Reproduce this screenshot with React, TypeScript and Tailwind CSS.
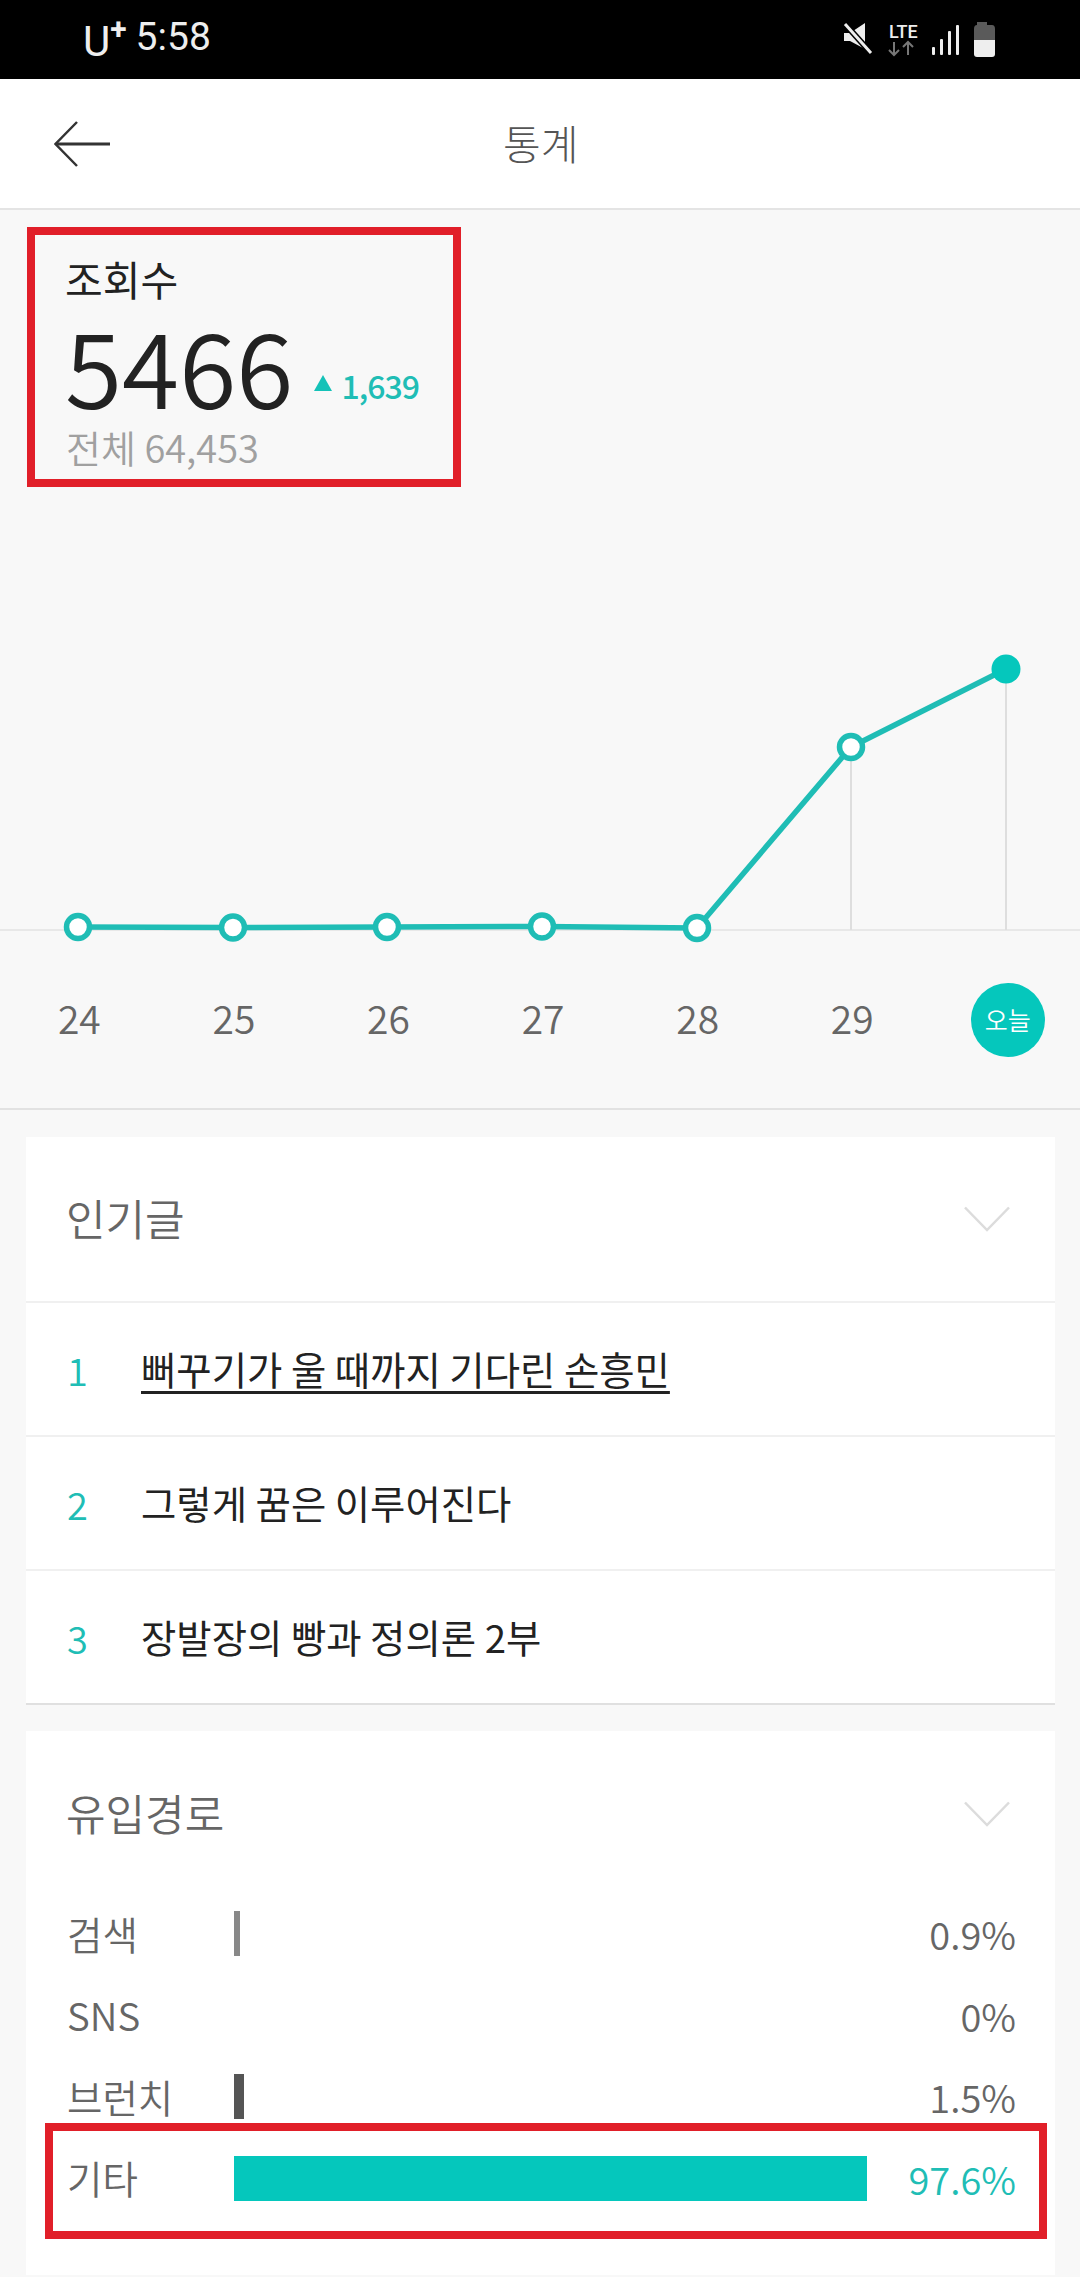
import React from "react";

const chartPoints = [
  { x: 78, y: 927 },
  { x: 233, y: 927.5 },
  { x: 387, y: 927 },
  { x: 542, y: 926.5 },
  { x: 697, y: 928 },
  { x: 851, y: 747 },
  { x: 1006, y: 669 },
];

const CHART_TOP = 487;

const popularPosts = [
  { rank: 1, title: "뻐꾸기가 울 때까지 기다린 손흥민", underline: true },
  { rank: 2, title: "그렇게 꿈은 이루어진다", underline: false },
  { rank: 3, title: "장발장의 빵과 정의론 2부", underline: false },
];

const Chevron = () => (
  <svg width="46" height="26" viewBox="0 0 46 26" fill="none" className="mt-[3px] block">
    <path d="M1 1.5 L23 24 L45 1.5" stroke="#dcdcdc" strokeWidth="2.5" />
  </svg>
);

const StatusBar = () => (
  <div className="flex h-[79px] items-center justify-between bg-black pl-[83px] pr-[83px] font-['Roboto',sans-serif] text-[#eeeeee]">
    <div className="flex items-start">
      <span className="text-[42px] leading-[46px] mt-[4px]">U</span>
      <span className="text-[30px] leading-[26px] font-bold mt-[1px]">+</span>
      <span className="ml-[9px] text-[39px] leading-[46px] -mt-[1px]">5:58</span>
    </div>
    <svg width="155" height="36" viewBox="0 0 155 36" className="block">
      {/* mute */}
      <path d="M2 11 L8 11 L23 1 L23 27 L8 19 L2 19 Z" fill="#eeeeee" />
      <path d="M3 2 L29 31" stroke="#000" strokeWidth="6" />
      <path d="M3 2 L29 31" stroke="#eeeeee" strokeWidth="3" />
      {/* network arrows */}
      <path d="M52 20 V33 M47 28 L52 33 L57 28" stroke="#777" strokeWidth="2" fill="none" />
      <path d="M66 33 V20 M61 25 L66 20 L71 25" stroke="#777" strokeWidth="2" fill="none" />
      {/* signal */}
      <rect x="90" y="25" width="3" height="8" rx="1" fill="#eeeeee" />
      <rect x="98" y="17" width="3" height="16" rx="1" fill="#eeeeee" />
      <rect x="106" y="9" width="3" height="24" rx="1" fill="#eeeeee" />
      <rect x="114" y="3" width="3" height="30" rx="1" fill="#eeeeee" />
      {/* battery */}
      <path d="M135 0 H145 V3 H150 Q153 3 153 7 V18 H132 V7 Q132 3 135 3 Z" fill="#5a5a5a" />
      <path d="M132 18 H153 V32 Q153 35 150 35 H135 Q132 35 132 32 Z" fill="#eeeeee" />
    </svg>
  </div>
);

const TrafficRow = ({ label, value, barClass, active }: { label: string; value: string; barClass: string; active?: boolean }) => (
  <div className="flex h-[81.5px] items-center">
    <span className="w-[167px] shrink-0 text-[38.5px] font-[350] text-[#666666]">{label}</span>
    <div className={`h-[45px] ${barClass}`} />
    <span className={`ml-auto text-[38px] font-[350] ${active ? "text-[#20bdb5]" : "text-[#666666]"}`}>{value}</span>
  </div>
);

const App = () => {
  const polyline = chartPoints.map((p) => `${p.x},${p.y - CHART_TOP}`).join(" ");

  return (
    <div className="relative h-[2277px] overflow-hidden bg-[#f8f8f8] font-['Noto_Sans_CJK_KR',sans-serif]">
      <StatusBar />
      <div className="relative">
        <span className="absolute left-[889px] top-[-56px] font-['Roboto',sans-serif] text-[18px] leading-[18px] font-medium text-[#eeeeee]">LTE</span>
      </div>

      <header className="flex h-[131px] items-center border-b-2 border-[#e4e4e4] bg-white pl-[54px]">
        <svg width="57" height="46" viewBox="0 0 57 46" fill="none" className="block">
          <path d="M23 1 L1.5 23 L23 45" stroke="#333" strokeWidth="2.5" />
          <path d="M2 23 H56" stroke="#333" strokeWidth="3" />
        </svg>
        <h1 className="ml-[392px] -mt-[2px] text-[41px] leading-none font-light text-[#555555]">통계</h1>
      </header>

      <section className="h-[277px] pl-[65px] pt-[40px]">
        <div className="text-[41px] leading-[56px] font-normal text-[#222222]">조회수</div>
        <div className="flex items-end">
          <span className="mt-[5px] text-[104px] leading-[106px] font-[350] text-[#222222]">5466</span>
          <svg width="18" height="16" viewBox="0 0 18 16" className="mb-[26px] ml-[21px] block">
            <path d="M9 0 L18 16 H0 Z" fill="#14c2b8" />
          </svg>
          <span className="mb-[12px] ml-[9px] text-[32px] leading-[40px] font-medium tracking-[-1px] text-[#20bdb5]">1,639</span>
        </div>
        <div className="ml-[1px] mt-[5px] text-[38px] leading-[50px] font-[350] text-[#a0a0a0]">전체 64,453</div>
      </section>

      <section className="border-b-2 border-[#e2e2e2]">
        <svg width="1080" height="458" viewBox="0 0 1080 458" className="block">
          <line x1="0" y1="443" x2="1080" y2="443" stroke="#e8e8e8" strokeWidth="2" />
          <line x1="851" y1="260" x2="851" y2="443" stroke="#dedede" strokeWidth="2" />
          <line x1="1006" y1="182" x2="1006" y2="443" stroke="#dedede" strokeWidth="2" />
          <polyline points={polyline} fill="none" stroke="#1fbdb5" strokeWidth="5.5" />
          {chartPoints.slice(0, 6).map((p) => (
            <circle key={p.x} cx={p.x} cy={p.y - CHART_TOP} r="11.5" fill="#ffffff" stroke="#1fbdb5" strokeWidth="5.5" />
          ))}
          <circle cx="1006" cy="182" r="14.5" fill="#05c7bc" />
        </svg>
        <div className="flex h-[163px] overflow-hidden pl-[2px] pt-[38px]">
          {["24", "25", "26", "27", "28", "29"].map((day) => (
            <div key={day} className="-mt-[1px] flex h-[70px] w-[154.6px] shrink-0 items-center justify-center text-[39px] font-[350] text-[#666666]">
              {day}
            </div>
          ))}
          <div className="ml-[1px] flex w-[154.6px] shrink-0 justify-center">
            <div className="flex h-[74px] w-[74px] items-center justify-center rounded-full bg-[#05c7bc] text-[25px] font-[350] text-white">
              오늘
            </div>
          </div>
        </div>
      </section>

      <section className="ml-[26px] mr-[25px] mt-[27px] border-b-2 border-[#e0e0e0] bg-white">
        <div className="flex h-[166px] items-center justify-between border-b-2 border-[#f0f0f0] pb-[4px] pl-[40px] pr-[45px]">
          <h2 className="text-[43px] font-[350] text-[#666666]">인기글</h2>
          <Chevron />
        </div>
        {popularPosts.map((post, i) => (
          <div key={post.rank} className={`flex items-center pl-[41px] ${i < 2 ? "h-[134px] border-b-2 border-[#f0f0f0]" : "h-[132px]"}`}>
            <span className="w-[74px] text-[38px] font-[350] text-[#20bdb5]">{post.rank}</span>
            <span className={`text-[38.4px] font-normal text-[#222222] ${post.underline ? "underline decoration-[3px] underline-offset-[6px]" : ""}`}>
              {post.title}
            </span>
          </div>
        ))}
      </section>

      <section className="ml-[26px] mr-[25px] mt-[26px] h-[544px] bg-white pl-[41px] pr-[39px]">
        <div className="flex h-[162px] items-center justify-between pr-[6px]">
          <h2 className="-ml-[1px] text-[43px] font-[350] text-[#666666]">유입경로</h2>
          <Chevron />
        </div>
        <TrafficRow label="검색" value="0.9%" barClass="w-[6px] bg-[#888888]" />
        <TrafficRow label="SNS" value="0%" barClass="w-0" />
        <TrafficRow label="브런치" value="1.5%" barClass="w-[10px] bg-[#555555]" />
        <TrafficRow label="기타" value="97.6%" barClass="w-[633px] bg-[#05c7bc]" active />
      </section>

      {/* red annotation boxes */}
      <div className="absolute left-[27px] top-[227px] h-[260px] w-[434px] border-8 border-[#e11f29]" />
      <div className="absolute left-[45px] top-[2123px] h-[116px] w-[1002px] border-8 border-[#e11f29]" />
    </div>
  );
};

export default App;
